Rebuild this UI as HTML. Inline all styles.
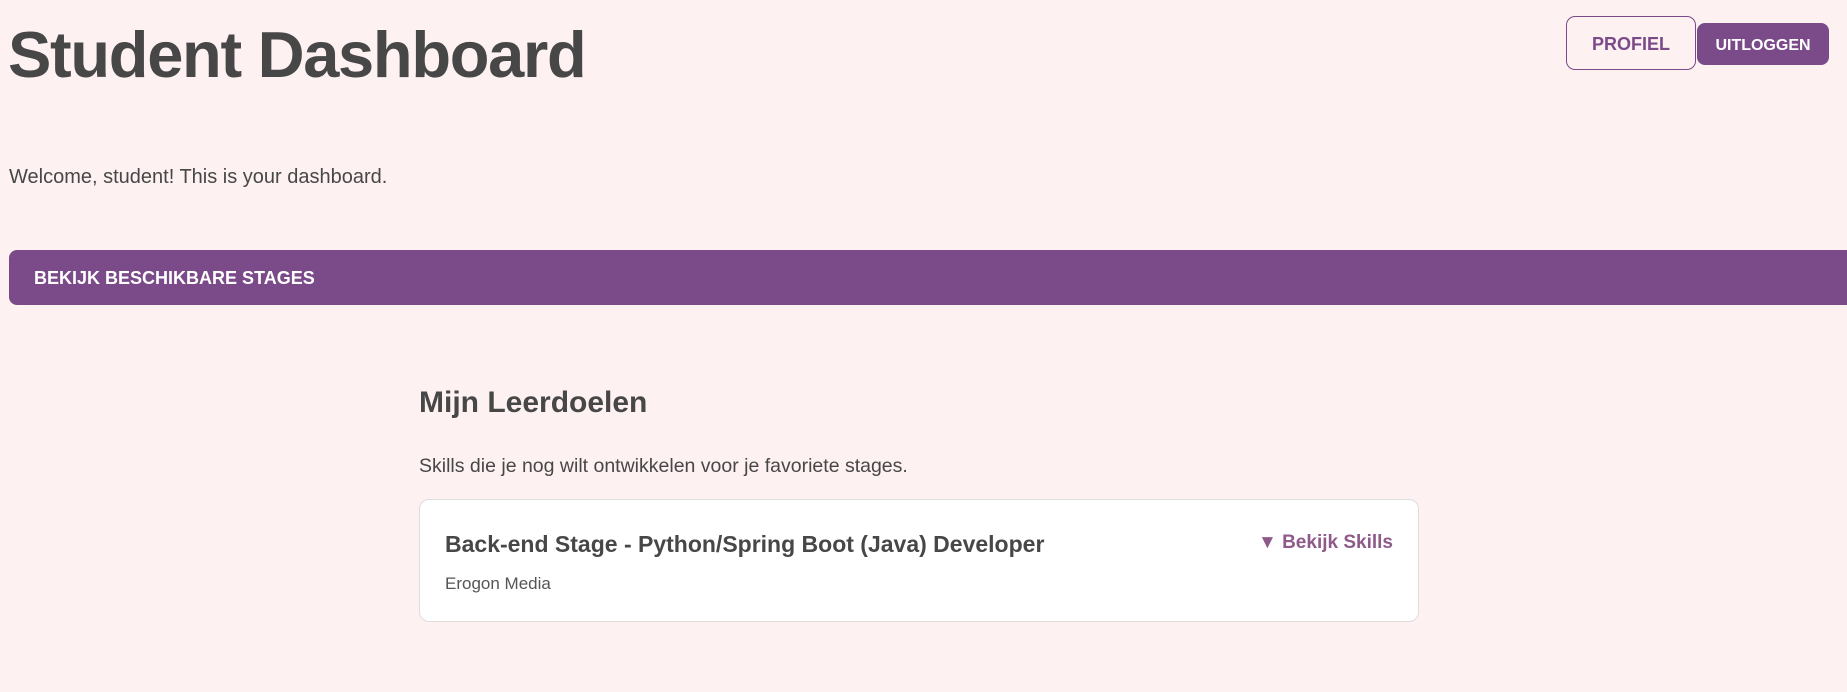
<!DOCTYPE html>
<html><head><meta charset="utf-8"><style>
*{margin:0;padding:0;box-sizing:border-box}
body{width:1847px;height:692px;overflow:hidden;background:#fef1f1;font-family:"Liberation Sans",sans-serif;color:#474747;position:relative}
.abs{position:absolute;white-space:nowrap}
h1{position:absolute;left:8px;top:17px;font-size:65px;font-weight:bold;letter-spacing:-1.3px;color:#474747}
.btn1{position:absolute;left:1566px;top:16px;width:130px;height:54px;border:1px solid #7b4a88;border-radius:9px;color:#7b4a88;font-weight:bold;font-size:18px;display:flex;align-items:center;justify-content:center;padding-top:3px}
.btn2{position:absolute;left:1697px;top:23px;width:132px;height:42px;background:#7b4a88;border-radius:8px;color:#fff;font-weight:bold;font-size:16px;display:flex;align-items:center;justify-content:center;padding-top:4px}
.bar{position:absolute;left:9px;top:250px;width:1850px;height:55px;background:#7b4a88;border-radius:8px;color:#fff;font-weight:bold;font-size:18px;padding-left:25px;line-height:57px}
.card{position:absolute;left:419px;top:499px;width:1000px;height:123px;background:#fff;border:1px solid #ddd;border-radius:10px}
</style></head><body>
<h1>Student Dashboard</h1>
<div class="btn1">PROFIEL</div>
<div class="btn2">UITLOGGEN</div>
<div class="abs" style="left:9px;top:166px;font-size:20px">Welcome, student! This is your dashboard.</div>
<div class="bar">BEKIJK BESCHIKBARE STAGES</div>
<div class="abs" style="left:419px;top:386px;font-size:30px;font-weight:bold">Mijn Leerdoelen</div>
<div class="abs" style="left:419px;top:455px;font-size:19.5px">Skills die je nog wilt ontwikkelen voor je favoriete stages.</div>
<div class="card">
<div class="abs" style="left:25px;top:31px;font-size:23px;font-weight:bold">Back-end Stage - Python/Spring Boot (Java) Developer</div>
<div class="abs" style="left:25px;top:74px;font-size:17px;color:#555">Erogon Media</div>
<div class="abs" style="right:25px;top:32px;font-size:19px;font-weight:bold;color:#8e5a8a">▼ Bekijk Skills</div>
</div>
</body></html>
